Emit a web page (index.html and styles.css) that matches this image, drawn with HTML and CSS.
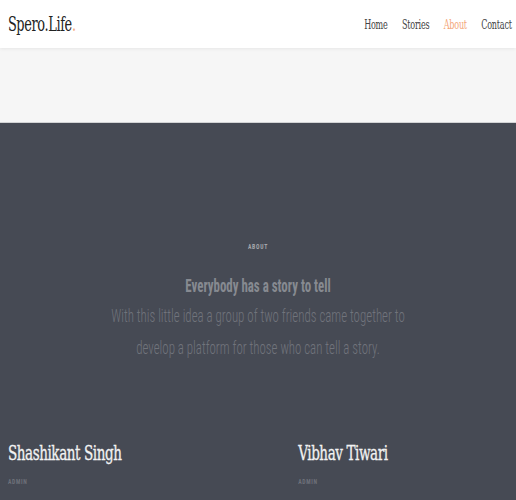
FILE: index.html
```html
<!DOCTYPE html>
<html>
<head>
<meta charset="utf-8">
<link rel="stylesheet" href="styles.css">
</head>
<body>
<div class="page">
  <header class="topbar">
    <div class="logo">Spero.Life<span class="dot">.</span></div>
    <nav class="nav">
      <a href="#">Home</a>
      <a href="#">Stories</a>
      <a href="#" class="active">About</a>
      <a href="#">Contact</a>
    </nav>
  </header>
  <div class="band"></div>
  <section class="about">
    <div class="intro">
      <div class="eyebrow">ABOUT</div>
      <h2 class="headline">Everybody has a story to tell</h2>
      <p class="lead">With this little idea a group of two friends came together to develop a platform for those who can tell a story.</p>
    </div>
    <div class="team">
      <div class="member">
        <h3 class="name">Shashikant Singh</h3>
        <div class="role">ADMIN</div>
      </div>
      <div class="member">
        <h3 class="name">Vibhav Tiwari</h3>
        <div class="role">ADMIN</div>
      </div>
    </div>
  </section>
</div>
</body>
</html>
```
FILE: styles.css
```css
html, body { margin: 0; padding: 0; overflow: hidden; }
body { background: #464a54; font-family: "Roboto Condensed", Roboto, sans-serif; }
.page { width: 720px; transform: scaleX(0.7167); transform-origin: 0 0; }
.topbar {
  height: 48px;
  background: #fff;
  display: flex;
  align-items: center;
  justify-content: space-between;
  padding: 0 6px 0 11px;
  box-shadow: 0 1px 4px rgba(0,0,0,0.07);
  position: relative;
  z-index: 1;
}
.logo { font-family: "DejaVu Serif Condensed", "DejaVu Serif", serif; font-size: 20px; color: #222; letter-spacing: -0.5px; }
.dot { color: #f4a77a; }
.nav { display: flex; gap: 20px; }
.nav a { font-family: "DejaVu Serif Condensed", "DejaVu Serif", serif; font-size: 12.5px; color: #444; text-decoration: none; letter-spacing: -0.3px; }
.nav a.active { color: #f4a77a; }
.band { height: 74px; background: #f6f6f6; border-bottom: 1px solid #d2d3d5; }
.about { background: #464a54; padding-top: 119px; }
.intro { text-align: center; }
.eyebrow { font-size: 8px; font-weight: 700; letter-spacing: 1px; color: #a4a6ab; line-height: 10px; }
.headline { margin: 22px 0 0; font-size: 18px; font-weight: 700; color: #878a91; line-height: 24px; }
.lead { margin: 2px auto 0; width: 440px; font-size: 18px; font-weight: 300; color: #71747c; line-height: 32px; }
.team { display: grid; grid-template-columns: 405px 1fr; padding: 75px 11px 0; }
.name { margin: 0; font-family: "DejaVu Serif Condensed", "DejaVu Serif", serif; font-weight: 400; font-size: 21px; color: #f2f2f2; line-height: 28px; letter-spacing: -0.6px; -webkit-text-stroke: 0.3px #f2f2f2; }
.role { margin-top: 10px; font-size: 8px; font-weight: 700; letter-spacing: 1px; color: #6e717a; }
```
